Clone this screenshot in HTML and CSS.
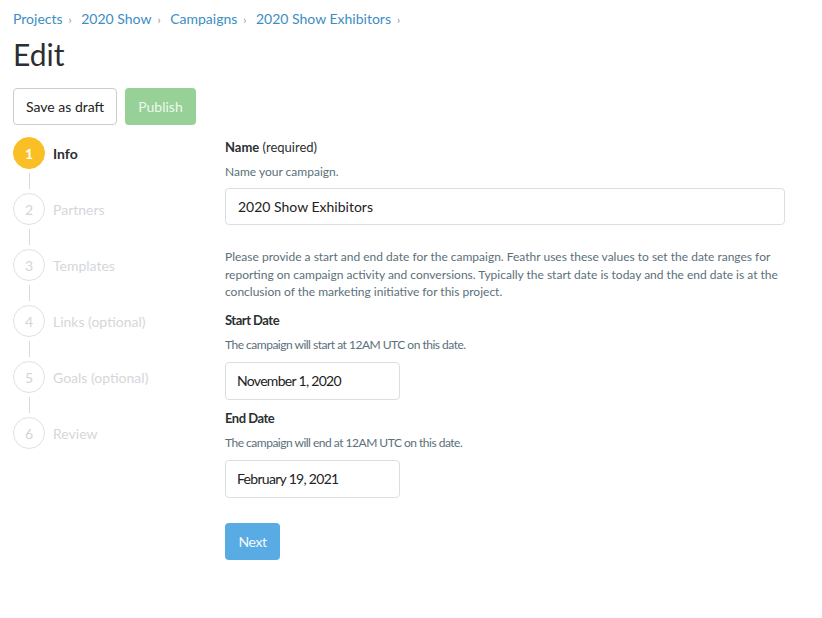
FILE: index.html
```html
<!DOCTYPE html>
<html lang="en">
<head>
    <meta charset="UTF-8">
    <meta name="viewport" content="width=device-width, initial-scale=1.0">
    <title>Edit Campaign</title>
    <link rel="stylesheet" href="styles.css">
</head>
<body>

    <!-- Breadcrumbs -->
    <div class="breadcrumbs">
        <a href="#">Projects</a><span class="sep">›</span>
        <a href="#">2020 Show</a><span class="sep">›</span>
        <a href="#">Campaigns</a><span class="sep">›</span>
        <a href="#">2020 Show Exhibitors</a><span class="sep">›</span>
    </div>

    <h1 class="page-title">Edit</h1>

    <div class="actions">
        <button class="btn btn-default">Save as draft</button>
        <button class="btn btn-success" disabled>Publish</button>
    </div>

    <div class="wizard">
        <!-- Steps -->
        <ul class="steps">
            <li class="step active"><span class="num">1</span><span class="label">Info</span></li>
            <li class="step"><span class="num">2</span><span class="label">Partners</span></li>
            <li class="step"><span class="num">3</span><span class="label">Templates</span></li>
            <li class="step"><span class="num">4</span><span class="label">Links (optional)</span></li>
            <li class="step"><span class="num">5</span><span class="label">Goals (optional)</span></li>
            <li class="step last"><span class="num">6</span><span class="label">Review</span></li>
        </ul>

        <!-- Form -->
        <div class="form">
            <div class="field">
                <label><strong>Name</strong> (required)</label>
                <p class="help">Name your campaign.</p>
                <input class="input wide" type="text" value="2020 Show Exhibitors">
            </div>

            <p class="note">Please provide a start and end date for the campaign. Feathr uses these values to set the date ranges for reporting on campaign activity and conversions. Typically the start date is today and the end date is at the conclusion of the marketing initiative for this project.</p>

            <div class="field date-field">
                <label><strong>Start Date</strong></label>
                <p class="help">The campaign will start at 12AM UTC on this date.</p>
                <input class="input date" type="text" value="November 1, 2020">
            </div>

            <div class="field date-field">
                <label><strong>End Date</strong></label>
                <p class="help">The campaign will end at 12AM UTC on this date.</p>
                <input class="input date" type="text" value="February 19, 2021">
            </div>

            <button class="btn btn-primary">Next</button>
        </div>
    </div>

</body>
</html>
```

FILE: styles.css
```css
body {
    font-family: Lato, "Liberation Sans", sans-serif;
    margin: 0;
    padding: 8px 13px;
    color: #2b2f33;
    background: #fff;
}

/* Breadcrumbs */
.breadcrumbs {
    font-size: 14px;
    line-height: 22px;
}

.breadcrumbs a {
    color: #3c8dc5;
    text-decoration: none;
}

.breadcrumbs .sep {
    color: #8b9299;
    font-size: 11px;
    margin: 0 6px;
}

.page-title {
    font-size: 30px;
    font-weight: normal;
    margin: 3px 0 14px;
    line-height: 40px;
}

/* Buttons */
.actions {
    display: flex;
    gap: 8px;
    margin-bottom: 12px;
}

.btn {
    font-family: inherit;
    font-size: 14px;
    height: 37px;
    padding: 0 12px;
    border-radius: 4px;
    border: 1px solid transparent;
    cursor: pointer;
}

.btn-default {
    background: #fff;
    border-color: #ccc;
    color: #222;
}

.btn-success {
    background: #97d197;
    color: #eef8ee;
}

.btn-primary {
    background: #59abe3;
    color: #f4f9fd;
    width: 55px;
    padding: 0;
    margin-top: 16px;
    letter-spacing: -0.4px;
}

/* Wizard */
.wizard {
    display: flex;
}

.steps {
    list-style: none;
    margin: 0;
    padding: 0;
    width: 212px;
    flex-shrink: 0;
}

.step {
    position: relative;
    display: flex;
    align-items: center;
    gap: 8px;
    height: 32px;
    margin-bottom: 24px;
    color: #d4d7da;
    font-size: 14px;
}

.step::after {
    content: "";
    position: absolute;
    left: 16px;
    top: 36px;
    height: 16px;
    border-left: 1px solid #d7d9db;
}

.step.last::after {
    display: none;
}

.step .num {
    width: 30px;
    height: 30px;
    border: 1px solid #dfe1e3;
    border-radius: 50%;
    display: flex;
    align-items: center;
    justify-content: center;
    color: #d2d5d8;
    font-size: 14px;
}

.step.active .num {
    background: #fbbf26;
    border-color: #fbbf26;
    color: #fff;
    font-weight: bold;
}

.step.active .label {
    color: #2b2f33;
    font-weight: bold;
}

/* Form */
.form {
    flex: 1;
    max-width: 560px;
    padding-top: 1px;
}

.field label {
    display: block;
    font-size: 13px;
    line-height: 18px;
}

.help {
    font-size: 12px;
    color: #5b6f7a;
    margin: 8px 0 9px;
}

.input {
    font-family: inherit;
    font-size: 14px;
    color: #222;
    height: 37px;
    box-sizing: border-box;
    border: 1px solid #dcdee0;
    border-radius: 4px;
    padding: 0 12px;
    margin-bottom: 9px;
    display: block;
}

.input.wide {
    width: 100%;
}

.input.date {
    width: 175px;
    height: 38px;
    padding: 0 11px;
}

/* date fields render tighter */
.date-field label {
    letter-spacing: -0.5px;
}

.date-field .help {
    letter-spacing: -0.5px;
    margin-bottom: 10px;
}

.date-field .input {
    letter-spacing: -0.7px;
}

.note {
    font-size: 12px;
    line-height: 17.5px;
    color: #5b6f7a;
    margin: 23px 0 10px;
}
```
